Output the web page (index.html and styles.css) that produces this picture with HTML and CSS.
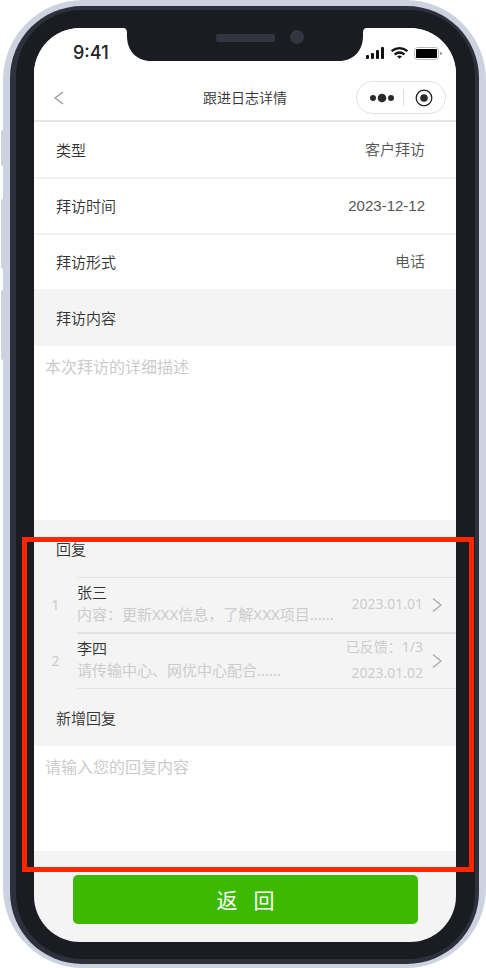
FILE: index.html
```html
<!DOCTYPE html>
<html lang="zh-CN">
<head>
<meta charset="utf-8">
<meta name="viewport" content="width=device-width, initial-scale=1">
<title>跟进日志详情</title>
<link rel="stylesheet" href="styles.css">
</head>
<body>
<div class="phone">
  <span class="side-key side-key-mute"></span>
  <span class="side-key side-key-up"></span>
  <span class="side-key side-key-down"></span>
  <div class="rim">
    <div class="bezel">
      <main class="screen">
        <svg class="notch" width="244" height="34" viewBox="0 0 244 34" aria-hidden="true">
          <path d="M0 0H244C241 0 240 2 240 5V8C240 23 230 33 216 33H28C14 33 4 23 4 8V5C4 2 3 0 0 0Z" fill="#1b1c21"/>
          <rect x="93" y="6" width="59" height="8" rx="2" fill="#343541"/>
          <circle cx="174" cy="9" r="7" fill="#343541"/>
        </svg>
        <div class="status">
          <span class="clock">9:41</span>
          <svg width="78" height="16" viewBox="0 0 78 16" aria-hidden="true">
            <g fill="#111"><rect x="0" y="10" width="3" height="4" rx="1"/><rect x="5" y="8" width="3" height="6" rx="1"/><rect x="10" y="5" width="3" height="9" rx="1"/><rect x="15" y="2" width="3" height="12" rx="1"/></g>
            <g fill="none" stroke="#111" stroke-width="2.2"><path d="M25.500 6.200Q33.500 0 41.500 6.200"/><path d="M28.500 9.500Q33.500 5.500 38.500 9.500"/></g>
            <path d="M31 11.300Q33.500 9.800 36 11.300L33.500 13.700Z" fill="#111"/>
            <rect x="48.500" y="2.500" width="24" height="12" rx="3" fill="#fff" stroke="#bbb"/>
            <rect x="50" y="4" width="21" height="9" rx="1" fill="#000"/>
            <path d="M74.500 7Q77 8.500 74.500 10Z" fill="#333"/>
          </svg>
        </div>
        <header class="nav">
          <button class="back" type="button" aria-label="返回上一页">
            <svg width="10" height="14" viewBox="0 0 10 14"><path d="M9 1L1 7L9 13" fill="none" stroke="#999" stroke-width="1.3"/></svg>
          </button>
          <h1>跟进日志详情</h1>
          <div class="capsule">
            <button class="more" type="button" aria-label="更多">
              <svg width="24" height="10" viewBox="0 0 24 10" fill="#2b2b2b"><circle cx="3" cy="5" r="3"/><circle cx="12" cy="5" r="4.300"/><circle cx="21" cy="5" r="3"/></svg>
            </button>
            <button class="close" type="button" aria-label="关闭">
              <svg width="18" height="18" viewBox="0 0 18 18"><circle cx="9" cy="9" r="7.800" fill="none" stroke="#222" stroke-width="1.3"/><circle cx="9" cy="9" r="3.800" fill="#2b2b2b"/></svg>
            </button>
          </div>
        </header>
        <dl class="details">
          <div class="row"><dt>类型</dt><dd>客户拜访</dd></div>
          <div class="row"><dt>拜访时间</dt><dd>2023-12-12</dd></div>
          <div class="row"><dt>拜访形式</dt><dd>电话</dd></div>
        </dl>
        <label class="section" for="visit">拜访内容</label>
        <textarea class="field field-tall" id="visit" placeholder="本次拜访的详细描述"></textarea>
        <h2 class="section">回复</h2>
        <ol class="replies">
          <li class="reply">
            <span class="index">1</span>
            <a class="card" href="#reply-1">
              <span class="body"><span class="name">张三</span><span class="text">内容：更新XXX信息，了解XXX项目......</span></span>
              <span class="meta"><span>2023.01.01</span></span>
              <svg width="10" height="14" viewBox="0 0 10 14"><path d="M1 0.500L9 7L1 13.500" fill="none" stroke="#aaa" stroke-width="1.4"/></svg>
            </a>
          </li>
          <li class="reply">
            <span class="index">2</span>
            <a class="card" href="#reply-2">
              <span class="body"><span class="name">李四</span><span class="text">请传输中心、网优中心配合......</span></span>
              <span class="meta"><span>已反馈：1/3</span><span>2023.01.02</span></span>
              <svg width="10" height="14" viewBox="0 0 10 14"><path d="M1 0.500L9 7L1 13.500" fill="none" stroke="#aaa" stroke-width="1.4"/></svg>
            </a>
          </li>
        </ol>
        <label class="section" for="new-reply">新增回复</label>
        <textarea class="field" id="new-reply" placeholder="请输入您的回复内容"></textarea>
        <footer class="footer"><button class="submit" type="button"><span>返</span><span>回</span></button></footer>
      </main>
    </div>
  </div>
  <div class="highlight"></div>
</div>
</body>
</html>
```
FILE: styles.css
```css
* {
  box-sizing: border-box;
}

body {
  margin: 0;
  background: #fff;
  color: #333;
  font: 350 15px/22px "Noto Sans", "Noto Sans CJK SC", sans-serif;
}

button {
  padding: 0;
  border: 0;
  background: none;
  font: inherit;
}

svg {
  display: block;
  flex: none;
}

/* Device frame */
.phone {
  position: relative;
  margin-left: 3px;
  padding: 6px 7px 4px;
  border-radius: 80px;
  background: #ccd2df;
}

.rim {
  padding: 4px 4px 5px 6px;
  border-radius: 72px;
  background: #2e303c;
}

.bezel {
  padding: 18px 19px 17px 18px;
  border-radius: 66px;
  background: #1b1c21;
}

.side-key {
  position: absolute;
  left: -2px;
  width: 4px;
  border-radius: 2px 0 0 2px;
  background: #ccd2df;
}

.side-key-mute {
  top: 130px;
  height: 36px;
}

.side-key-up {
  top: 199px;
  height: 70px;
}

.side-key-down {
  top: 290px;
  height: 70px;
}

.screen {
  position: relative;
  display: flex;
  flex-direction: column;
  overflow: hidden;
  border-radius: 46px;
  background: #f4f4f4;
}

.notch {
  position: absolute;
  top: 0;
  left: 50%;
  transform: translateX(-50%);
}

/* Status and navigation */
.status {
  display: flex;
  justify-content: space-between;
  align-items: center;
  height: 47px;
  padding: 2px 12px 0 39px;
  background: #fff;
}

.clock {
  color: #222;
  font: 500 18px/22px Inter, sans-serif;
}

.nav {
  display: grid;
  grid-template-columns: 1fr auto 1fr;
  align-items: center;
  height: 47px;
  padding: 0 10px;
  border-bottom: 2px solid #e6e6e6;
  background: #fff;
}

.back {
  display: flex;
  align-items: center;
  height: 32px;
  padding-left: 10px;
}

.nav h1 {
  margin: 0;
  font-size: 14px;
  font-weight: 350;
}

.capsule {
  display: flex;
  justify-self: end;
  align-items: center;
  width: 90px;
  height: 33px;
  border: 1px solid #e2e2e2;
  border-radius: 17px;
}

.capsule button {
  display: flex;
  flex: 1;
  justify-content: center;
  align-items: center;
  height: 17px;
}

.more {
  padding-left: 4px;
}

.close {
  border-left: 1px solid #ddd;
}

/* Visit details */
.details {
  margin: 0;
  background: #fff;
}

.row {
  display: flex;
  justify-content: space-between;
  align-items: center;
  height: 55px;
  padding: 0 31px 0 22px;
}

.row + .row {
  height: 56px;
  border-top: 2px solid #f2f2f2;
}

.row dd {
  margin: 0;
  color: #555;
  font-family: "Liberation Sans", "Noto Sans CJK SC", sans-serif;
}

.section {
  display: flex;
  align-items: center;
  height: 57px;
  margin: 0;
  padding: 0 22px;
  font-size: 15px;
  font-weight: 350;
}

.field {
  display: block;
  width: 100%;
  height: 105px;
  padding: 10px 11px;
  border: 0;
  background: #fff;
  color: #333;
  font: 400 16px/22px "Noto Sans", "Noto Sans CJK SC", sans-serif;
  resize: none;
}

.field-tall {
  height: 174px;
}

.field::placeholder {
  color: #ccc;
  opacity: 1;
}

/* Replies */
.replies {
  margin: 0;
  padding: 0;
  list-style: none;
}

.reply {
  display: flex;
  align-items: center;
  color: #ccc;
  font-weight: 400;
}

.index {
  width: 43px;
  font-size: 14px;
  text-align: center;
}

.card {
  display: flex;
  flex: 1;
  align-items: center;
  min-width: 0;
  height: 56px;
  padding-right: 14px;
  border-top: 1px solid #e3e3e3;
  border-bottom: 1px solid #e3e3e3;
  color: inherit;
  text-decoration: none;
}

.body {
  display: flex;
  flex: 1;
  flex-direction: column;
  min-width: 0;
  padding-bottom: 4px;
  white-space: nowrap;
}

.name {
  color: #333;
  font-weight: 350;
}

.meta {
  display: flex;
  flex-direction: column;
  gap: 4px;
  margin-right: 9px;
  padding-bottom: 2px;
  font-size: 14px;
  text-align: right;
}

/* Actions */
.footer {
  padding: 24px 38px 18px 39px;
}

.submit {
  display: flex;
  justify-content: center;
  align-items: center;
  gap: 16px;
  width: 100%;
  height: 49px;
  border-radius: 5px;
  background: #3cb900;
  color: #fff;
  font-size: 21px;
  font-weight: 400;
}

/* Annotation over the reply area */
.highlight {
  position: absolute;
  top: 537px;
  right: 12px;
  left: 19px;
  height: 335px;
  border: 5px solid #ff2600;
}
```
